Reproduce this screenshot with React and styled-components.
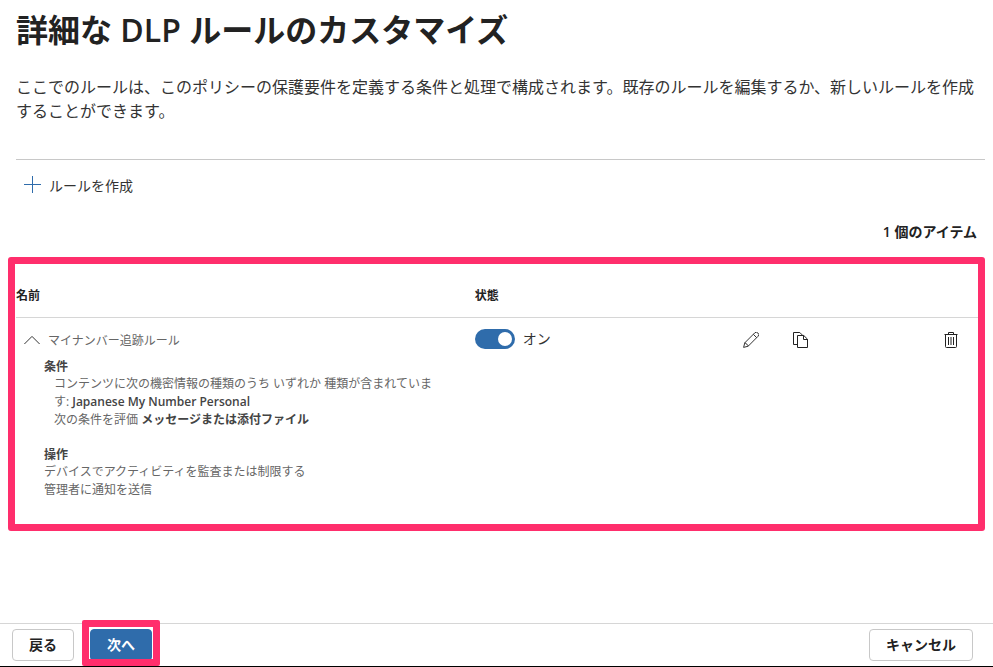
import React, { useState } from 'react'
import styled, { createGlobalStyle } from 'styled-components';

const rule = {
    name: 'マイナンバー追跡ルール',
    actions: ['デバイスでアクティビティを監査または制限する', '管理者に通知を送信'],
};

function App() {
    const [open, setOpen] = useState(true);
    const [enabled, setEnabled] = useState(true);

    return (
        <Page>
            <GlobalStyle />
            <Main>
                <Intro>
                    <h1>詳細な DLP ルールのカスタマイズ</h1>
                    <p>ここでのルールは、このポリシーの保護要件を定義する条件と処理で構成されます。既存のルールを編集するか、新しいルールを作成することができます。</p>
                </Intro>
                <CommandBar>
                    <CommandButton type="button">
                        <PlusIcon />
                        ルールを作成
                    </CommandButton>
                </CommandBar>
                <ItemCount>1 個のアイテム</ItemCount>
                <RulePanel>
                    <RuleTable>
                        <colgroup>
                            <NameCol />
                            <StateCol />
                            <IconCol />
                            <IconCol />
                            <col />
                        </colgroup>
                        <thead>
                            <tr>
                                <th scope="col">名前</th>
                                <th scope="col">状態</th>
                                <th colSpan={3} aria-label="コマンド"></th>
                            </tr>
                        </thead>
                        <tbody>
                            <tr>
                                <td>
                                    <RuleName type="button" aria-expanded={open} onClick={() => setOpen(!open)}>
                                        <ChevronIcon $open={open} />
                                        {rule.name}
                                    </RuleName>
                                    {open && (
                                        <Details>
                                            <h2>条件</h2>
                                            <Conditions>
                                                <p>コンテンツに次の機密情報の種類のうち いずれか 種類が含まれています: <b>Japanese My Number Personal</b></p>
                                                <p>次の条件を評価 <b>メッセージまたは添付ファイル</b></p>
                                            </Conditions>
                                            <h2>操作</h2>
                                            {rule.actions.map((action) => <p key={action}>{action}</p>)}
                                        </Details>
                                    )}
                                </td>
                                <td>
                                    <StateLabel>
                                        <Toggle type="checkbox" role="switch" checked={enabled} onChange={() => setEnabled(!enabled)} />
                                        {enabled ? 'オン' : 'オフ'}
                                    </StateLabel>
                                </td>
                                <td>
                                    <IconButton type="button" aria-label="編集"><EditIcon /></IconButton>
                                </td>
                                <td>
                                    <IconButton type="button" aria-label="コピー"><CopyIcon /></IconButton>
                                </td>
                                <td>
                                    <IconButton type="button" aria-label="削除" $end><TrashIcon /></IconButton>
                                </td>
                            </tr>
                        </tbody>
                    </RuleTable>
                </RulePanel>
            </Main>
            <Footer>
                <FooterButton type="button">戻る</FooterButton>
                <Marked>
                    <FooterButton type="button" $primary>次へ</FooterButton>
                </Marked>
                <CancelButton type="button">キャンセル</CancelButton>
            </Footer>
        </Page>
    )
}

const PlusIcon = () => (
    <svg width="17" height="17" viewBox="0 0 17 17" fill="none" stroke="#2f6cab" aria-hidden="true">
        <path d="M8.5 0v17M0 8.5h17" />
    </svg>
);

const EditIcon = () => (
    <svg width="16" height="16" viewBox="0 0 16 16" fill="none" stroke="#333" aria-hidden="true">
        <path d="M.6 15.4l1.200-4.600L11.600 1a2.200 2.200 0 0 1 3.300 0 2.200 2.200 0 0 1 .1 3.300L5.200 14.200z" />
        <path d="M1.800 10.800c1 .1 1.700.6 1.800 1.600 1 .1 1.500.8 1.600 1.800M10.300 2.300l3.400 3.400" />
    </svg>
);

const CopyIcon = () => (
    <svg width="16" height="16" viewBox="0 0 16 16" fill="none" stroke="#222" aria-hidden="true">
        <path d="M4.500 12.500h-4V.5h6.300l3 3" />
        <path d="M4.500 3.500h6.300l3.700 3.700v8.300h-10z" />
        <path d="M10.500 3.500v4h4" />
    </svg>
);

const TrashIcon = () => (
    <svg width="14" height="16" viewBox="0 0 14 16" fill="none" stroke="#222" aria-hidden="true">
        <path d="M.5 2.500h13M4.500 2.500v-2h5v2M1.500 2.500v12q0 1 1 1h9q1 0 1-1v-12" />
        <path d="M4.500 5v8M7 5v8M9.500 5v8" />
    </svg>
);

const ChevronIcon = ({ $open }) => (
    <Chevron $open={$open} width="16" height="16" viewBox="0 0 16 16" fill="none" stroke="#333" aria-hidden="true">
        <path d="M.4 12L8 4.400l7.600 7.600" />
    </Chevron>
);

const GlobalStyle = createGlobalStyle`
*{
    box-sizing: border-box;
}
body{
    margin: 0;
    background: white;
    color: #222;
    font-family: "Open Sans", "Noto Sans CJK JP", sans-serif;
}
button{
    font-family: inherit;
    cursor: pointer;
}
h1, h2, p{
    margin: 0;
}
`;
const Page = styled.div`
display: flex;
flex-direction: column;
min-height: 100vh;
border-bottom: 1px solid black;
`;
const Main = styled.main`
flex: 1;
padding: 0 8px 16px;
`;
const Intro = styled.header`
padding: 8px 8px 0;

h1{
    font-size: 32px;
    line-height: 44px;
    font-weight: 600;
}
p{
    margin-top: 23px;
    font-size: 16px;
    line-height: 24px;
    color: #333;
}
`;
const CommandBar = styled.div`
display: flex;
margin: 36px 0 0 8px;
padding: 8px;
border-top: 1px solid #c8c8c8;
`;
const CommandButton = styled.button`
display: flex;
align-items: center;
gap: 8px;
height: 33px;
padding: 0;
border: 0;
background: none;
color: #333;
font-size: 14px;
`;
const ItemCount = styled.div`
padding: 12px 8px 14px;
font-size: 14px;
line-height: 22px;
font-weight: 600;
text-align: right;
`;
const RulePanel = styled.section`
padding-left: 1px;
border: 7px solid #ff2e6c;
border-radius: 3px;
`;
const RuleTable = styled.table`
width: 100%;
table-layout: fixed;
border-collapse: collapse;
font-size: 12px;
line-height: 18px;

th{
    padding: 23px 0 12px;
    border-bottom: 1px solid #d6d6d6;
    font-weight: 600;
    text-align: left;
}
td{
    padding: 11px 0 0;
    vertical-align: top;
}
`;
const NameCol = styled.col`
width: 47.7%;
`;
const StateCol = styled.col`
width: 27%;
`;
const IconCol = styled.col`
width: 50px;
`;
const RuleName = styled.button`
display: flex;
align-items: center;
gap: 8px;
height: 22px;
padding: 0 8px;
border: 0;
background: none;
color: #666;
font-size: 12px;
`;
const Chevron = styled.svg`
transform: ${(props) => (props.$open ? 'none' : 'rotate(180deg)')};
`;
const Details = styled.div`
padding: 7px 40px 25px 28px;
color: #666;

h2{
    font-size: 12px;
    line-height: 17px;
    font-weight: 600;
    color: #444;
}
b{
    font-weight: 600;
    color: #444;
}
`;
const Conditions = styled.div`
padding: 0 0 17px 10px;
`;
const StateLabel = styled.label`
display: inline-flex;
align-items: center;
gap: 8px;
height: 20px;
color: #333;
font-size: 14px;
`;
const Toggle = styled.input`
appearance: none;
display: flex;
align-items: center;
width: 40px;
height: 20px;
margin: 0;
padding: 0 3px;
border-radius: 10px;
background: ${(props) => (props.checked ? '#2f6cab' : '#888')};

&::before{
    content: "";
    width: 14px;
    height: 14px;
    margin-left: ${(props) => (props.checked ? 'auto' : '0')};
    border-radius: 50%;
    background: white;
}
`;
const IconButton = styled.button`
display: flex;
margin-left: ${(props) => (props.$end ? 'auto' : '0')};
padding: 3px ${(props) => (props.$end ? '20px' : '8px')} 3px 8px;
border: 0;
background: none;
`;
const Footer = styled.footer`
display: flex;
align-items: center;
gap: 16px;
padding: 5px 20px 5px 12px;
border-top: 1px solid #d6d6d6;
`;
const FooterButton = styled.button`
min-width: 62px;
height: 32px;
padding: 0 16px 2px;
border: 1px solid ${(props) => (props.$primary ? '#2f6cab' : '#c8c8c8')};
border-radius: 4px;
background: ${(props) => (props.$primary ? '#2f6cab' : 'white')};
color: ${(props) => (props.$primary ? 'white' : '#222')};
font-size: 14px;
font-weight: 600;
`;
const CancelButton = styled(FooterButton)`
margin-left: auto;
`;
// frame drawn around the button, over the footer line
const Marked = styled.div`
position: relative;

&::after{
    content: "";
    position: absolute;
    inset: -9px -8px -5px;
    border: 7px solid #ff2e6c;
    border-radius: 2px;
    pointer-events: none;
}
`;
export default App;
